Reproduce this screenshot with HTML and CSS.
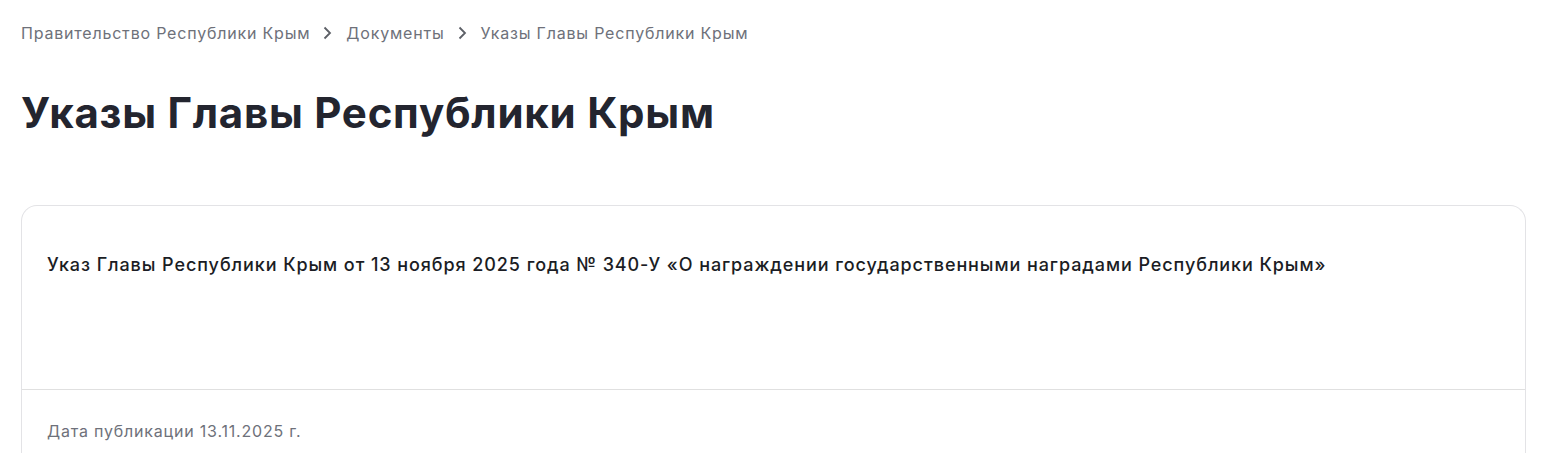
FILE: index.html
```html
<!DOCTYPE html>
<html lang="ru">
<head>
<meta charset="utf-8">
<link rel="stylesheet" href="styles.css">
</head>
<body>
<div class="page">
  <nav class="crumbs">
    <a class="crumb">Правительство Республики Крым</a>
    <svg class="chev" width="10" height="14" viewBox="0 0 10 14"><path d="M2.5 1.5 L8 7 L2.5 12.5" fill="none" stroke="#5c5f66" stroke-width="1.8"/></svg>
    <a class="crumb">Документы</a>
    <svg class="chev" width="10" height="14" viewBox="0 0 10 14"><path d="M2.5 1.5 L8 7 L2.5 12.5" fill="none" stroke="#5c5f66" stroke-width="1.8"/></svg>
    <span class="crumb">Указы Главы Республики Крым</span>
  </nav>
  <h1 class="title">Указы Главы Республики Крым</h1>
  <div class="card">
    <div class="card-body">
      <p class="doc">Указ Главы Республики Крым от 13 ноября 2025 года № 340-У «О награждении государственными наградами Республики Крым»</p>
    </div>
    <div class="card-foot">Дата публикации 13.11.2025 г.</div>
  </div>
</div>
</body>
</html>
```
FILE: styles.css
```css
* { box-sizing: border-box; }
html, body { margin: 0; background: #fff; }
body { font-family: Inter, "Noto Sans", sans-serif; }
.page { padding: 23px 20px 0 21px; }
.crumbs { display: flex; align-items: center; gap: 12px; height: 20px; font-size: 16px; letter-spacing: 0.8px; color: #6e717a; }
.crumb { color: #6e717a; text-decoration: none; }
.chev { display: block; margin: 0 2px 0 0; }
.title { margin: 46px 0 0; font-size: 42px; line-height: 48px; font-weight: 700; color: #23252f; letter-spacing: 0.75px; }
.card { margin-top: 68px; border: 1px solid #e3e3e6; border-radius: 16px; border-bottom: none; border-bottom-left-radius: 0; border-bottom-right-radius: 0; }
.card-body { height: 184px; padding: 47px 25px 0; border-bottom: 1px solid #e0e0e0; }
.doc { margin: 0; font-size: 18px; line-height: 24px; color: #1b1d24; font-weight: 500; letter-spacing: 0.92px; }
.card-foot { padding: 31px 25px 20px; font-size: 16px; letter-spacing: 0.8px; color: #6e717a; }
```
